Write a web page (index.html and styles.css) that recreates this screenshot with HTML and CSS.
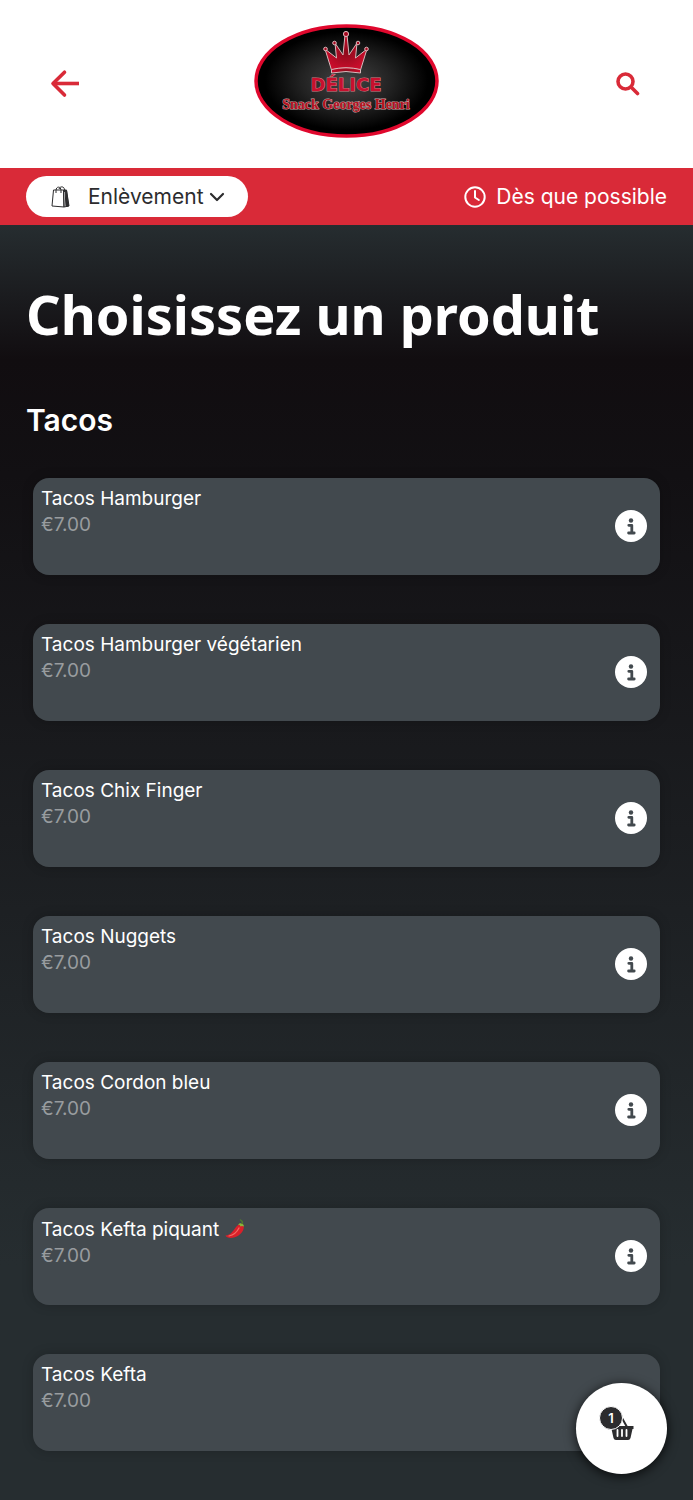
FILE: index.html
```html
<!DOCTYPE html>
<html lang="fr">
<head>
    <meta charset="utf-8">
    <title>Délice Snack Georges Henri</title>
    <meta name="viewport" content="width=device-width, initial-scale=1.0">
    <link rel="stylesheet" href="styles.css">
</head>
<body>
    <!-- icons used several times -->
    <svg class="sprite" aria-hidden="true">
        <symbol id="icon-info" viewBox="0 0 32 32">
            <circle cx="16" cy="16" r="16" fill="#fff"/>
            <circle cx="16" cy="10.500" r="2.200" fill="#42494e"/>
            <path d="M13.8 15.300h3v7.700M13.600 23h5.600" fill="none" stroke="#42494e" stroke-width="2.8" stroke-linecap="round" stroke-linejoin="round"/>
        </symbol>
    </svg>

    <header class="header">
        <a class="header-link" href="#" aria-label="Retour">
            <svg width="30" height="30" viewBox="0 0 30 30" fill="none" stroke="#d92a38" stroke-width="3.6" stroke-linejoin="round">
                <path d="M3.500 14.500H29"/>
                <path d="M14.500 3.200L3 14.500L14.500 26" stroke-linecap="round"/>
            </svg>
        </a>
        <a class="logo" href="#" aria-label="Délice Snack Georges Henri">
            <svg width="185" height="116" viewBox="0 0 185 116">
                <defs>
                    <radialGradient id="logo-bg">
                        <stop offset="0" stop-color="#444"/>
                        <stop offset="0.5" stop-color="#222"/>
                        <stop offset="0.9" stop-color="#000"/>
                    </radialGradient>
                    <radialGradient id="crown-bg">
                        <stop offset="0" stop-color="#8e0a1c"/>
                        <stop offset="1" stop-color="#c90d2b"/>
                    </radialGradient>
                </defs>
                <ellipse cx="92.5" cy="58" rx="90.5" ry="55" fill="url(#logo-bg)" stroke="#e0082d" stroke-width="3.5"/>
                <g fill="url(#crown-bg)" stroke="#d9b9bb" stroke-width="1">
                    <path d="M77.500 47L71 26L82.500 35L81 20L89 32L91 12H93L95 32L103 20L101.500 35L113 26L106.500 47Q92 43 77.500 47Z"/>
                    <path d="M77.500 46.500Q92 43 106.500 46.500V50Q92 47 77.500 50Z"/>
                    <circle cx="92" cy="11" r="2.6"/>
                    <circle cx="80.500" cy="20" r="1.800"/>
                    <circle cx="104" cy="20" r="1.800"/>
                    <circle cx="71.500" cy="26" r="1.800"/>
                    <circle cx="112.500" cy="26" r="1.800"/>
                </g>
                <text class="logo-name" x="92" y="68" text-anchor="middle">DÉLICE</text>
                <text class="logo-sub" x="92" y="86" text-anchor="middle">Snack Georges Henri</text>
            </svg>
        </a>
        <a class="header-link" href="#" aria-label="Rechercher">
            <svg width="24" height="24" viewBox="0 0 24 24" fill="none" stroke="#d92a38" stroke-linecap="round">
                <circle cx="9.500" cy="9.500" r="7.500" stroke-width="3.600"/>
                <path d="M15.500 15.500L21.500 21.500" stroke-width="3.600"/>
            </svg>
        </a>
    </header>

    <div class="order-bar">
        <label class="pickup">
            <svg class="bag" width="20" height="22" viewBox="0 0 20 22" fill="none" stroke="#2c2c2e">
                <path d="M2.500 4L1 20L13 21L12.500 4Z"/>
                <path d="M12.500 4H15.500L18 20L13 21Z"/>
                <path d="M14 4.500H15.500L17.500 20L15 20.500Z" fill="#2c2c2e"/>
                <path d="M5 7V4.500C5 0 10 0 10 4.500V7M8 3C9 0 13.500 0 13.500 4V6"/>
            </svg>
            <select class="pickup-select" aria-label="Mode de commande">
                <option>Enlèvement</option>
            </select>
            <svg class="chevron" width="16" height="10" viewBox="0 0 16 10" fill="none" stroke="#2c2c2e" stroke-width="2.200" stroke-linecap="round" stroke-linejoin="round">
                <path d="M2 2L8 8L14 2"/>
            </svg>
        </label>
        <button type="button" class="time">
            <svg width="22" height="22" viewBox="0 0 22 22" fill="none" stroke="#fff" stroke-width="2" stroke-linecap="round" stroke-linejoin="round">
                <circle cx="11" cy="11" r="9.700"/>
                <path d="M11 5V11.500L14.800 14"/>
            </svg>
            Dès que possible
        </button>
    </div>

    <main class="content">
        <h1>Choisissez un produit</h1>
        <h2>Tacos</h2>
        <ul class="products">
            <li class="product">
                <div>
                    <h3>Tacos Hamburger</h3>
                    <p class="price">€7.00</p>
                </div>
                <button type="button" class="info" aria-label="Infos"><svg width="32" height="32"><use href="#icon-info"/></svg></button>
            </li>
            <li class="product">
                <div>
                    <h3>Tacos Hamburger végétarien</h3>
                    <p class="price">€7.00</p>
                </div>
                <button type="button" class="info" aria-label="Infos"><svg width="32" height="32"><use href="#icon-info"/></svg></button>
            </li>
            <li class="product">
                <div>
                    <h3>Tacos Chix Finger</h3>
                    <p class="price">€7.00</p>
                </div>
                <button type="button" class="info" aria-label="Infos"><svg width="32" height="32"><use href="#icon-info"/></svg></button>
            </li>
            <li class="product">
                <div>
                    <h3>Tacos Nuggets</h3>
                    <p class="price">€7.00</p>
                </div>
                <button type="button" class="info" aria-label="Infos"><svg width="32" height="32"><use href="#icon-info"/></svg></button>
            </li>
            <li class="product">
                <div>
                    <h3>Tacos Cordon bleu</h3>
                    <p class="price">€7.00</p>
                </div>
                <button type="button" class="info" aria-label="Infos"><svg width="32" height="32"><use href="#icon-info"/></svg></button>
            </li>
            <li class="product">
                <div>
                    <h3>Tacos Kefta piquant
                        <svg class="chili" width="20" height="28" viewBox="0 0 20 20">
                            <path d="M0.500 16.500C6 16 8 12 11 8C13 5 17 4 18.500 7C20 11 15 17 9 18.500C5 19.500 1 18.500 0.500 16.500Z" fill="#d9202a"/>
                            <path d="M4 17C9 16 12 13 14 9" fill="none" stroke="#f46a62" stroke-width="1.200" stroke-linecap="round"/>
                            <path d="M13 5.500C15 3.500 18.500 4 19 7.500L17 7L15.500 7.500L14.800 6Z" fill="#8bb63c"/>
                            <path d="M17 4.500C18 3 17 2 15.500 1" fill="none" stroke="#4f7a2e" stroke-width="1.500" stroke-linecap="round"/>
                        </svg>
                    </h3>
                    <p class="price">€7.00</p>
                </div>
                <button type="button" class="info" aria-label="Infos"><svg width="32" height="32"><use href="#icon-info"/></svg></button>
            </li>
            <li class="product">
                <div>
                    <h3>Tacos Kefta</h3>
                    <p class="price">€7.00</p>
                </div>
            </li>
        </ul>
    </main>

    <button type="button" class="cart" aria-label="Panier">
        <svg width="26" height="26" viewBox="0 0 26 26">
            <path d="M8 11L13 2M18 11L13 2" fill="none" stroke="#2c2c2e" stroke-width="2"/>
            <path d="M1.500 10H24.500V13H23.500L21.500 22Q21 24 19 24H7Q5 24 4.500 22L2.500 13H1.500Z" fill="#2c2c2e"/>
            <path d="M8.500 14V20M13 14V20M17.500 14V20" stroke="#fff" stroke-width="1.800" stroke-linecap="round"/>
        </svg>
        <span class="cart-count">1</span>
    </button>
</body>
</html>
```
FILE: styles.css
```css
* {
    box-sizing: border-box;
}

body {
    margin: 0;
    font-family: Inter, "Noto Sans", sans-serif;
    font-size: 21px;
    color: #fff;
    background-color: #262d30;
}

h1, h2, h3, p, ul {
    margin: 0;
    padding: 0;
}

button {
    padding: 0;
    border: none;
    background: none;
    color: inherit;
    font: inherit;
    cursor: pointer;
}

svg {
    display: block;
}

.sprite {
    width: 0;
    height: 0;
    position: absolute;
}

.header {
    height: 168px;
    padding: 0 50px;
    display: flex;
    align-items: center;
    justify-content: space-between;
    background-color: #fff;
}

.header-link {
    width: 30px;
    display: flex;
    justify-content: center;
}

.logo {
    padding-bottom: 6px;
}

.logo-name {
    font: bold 18px "DejaVu Sans", sans-serif;
    fill: #c8102e;
    stroke: #cf7f86;
    stroke-width: 1px;
    paint-order: stroke;
}

.logo-sub {
    font: bold 14px "Liberation Serif", serif;
    fill: #b5121f;
    stroke: #c9a3a5;
    stroke-width: 1px;
    paint-order: stroke;
}

.order-bar {
    height: 57px;
    padding: 0 26px;
    display: flex;
    align-items: center;
    justify-content: space-between;
    background-color: #d92a38;
}

.pickup {
    height: 41px;
    padding: 0 23px 0 25px;
    display: flex;
    align-items: center;
    border-radius: 21px;
    background-color: #fff;
}

.pickup-select {
    margin: 0 5px 0 17px;
    padding: 0;
    border: none;
    appearance: none;
    background: none;
    color: #2c2c2e;
    font: inherit;
}

.time {
    display: flex;
    align-items: center;
    gap: 10px;
}

.content {
    padding: 49px 26px;
    background: linear-gradient(#262d30 0, #1b1c1f 70px, #110d10 135px, #121013 250px, #262d30 1040px);
}

h1 {
    font-family: "Noto Sans", "Open Sans", sans-serif;
    font-size: 54px;
    font-weight: 700;
    line-height: 80px;
}

h2 {
    margin-top: 46px;
    font-size: 30px;
    font-weight: 600;
    line-height: 40px;
}

.products {
    margin-top: 38px;
    padding: 0 7px;
    display: flex;
    flex-direction: column;
    gap: 49px;
    list-style: none;
}

.product {
    height: 97px;
    padding: 7px 13px 0 8px;
    display: flex;
    justify-content: space-between;
    border-radius: 16px;
    background-color: #42494e;
    box-shadow: 0 0 12px rgba(0, 0, 0, 0.2);
}

h3 {
    display: flex;
    align-items: center;
    gap: 6px;
    font-size: 19px;
    font-weight: 400;
    line-height: 27px;
}

.price {
    color: #989c9f;
    font-size: 19px;
    line-height: 26px;
}

.info {
    height: 32px;
    margin-top: 25px;
}

.cart {
    position: fixed;
    right: 26px;
    bottom: 26px;
    width: 91px;
    height: 91px;
    display: flex;
    align-items: center;
    justify-content: center;
    border-radius: 50%;
    background-color: #fff;
    box-shadow: 0 2px 12px rgba(0, 0, 0, 0.8);
}

.cart-count {
    position: absolute;
    top: 23px;
    left: 23px;
    width: 24px;
    height: 24px;
    border: 1px solid #fff;
    border-radius: 50%;
    background-color: #2c2c2e;
    color: #fff;
    font-size: 13px;
    font-weight: 600;
    line-height: 22px;
    text-align: center;
}
```
